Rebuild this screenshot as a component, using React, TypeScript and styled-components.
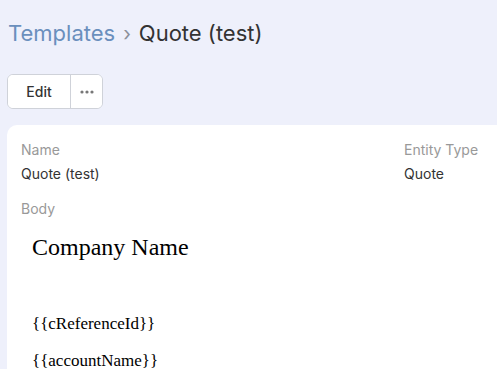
import styled, { createGlobalStyle } from "styled-components";

const GlobalStyle = createGlobalStyle`
  html, body {
    margin: 0;
    padding: 0;
    background: #eef0fb;
    font-family: Inter, "Noto Sans", sans-serif;
    overflow: hidden;
  }
`;

const template = {
  name: "Quote (test)",
  entityType: "Quote",
};

function DotsIcon() {
  return (
    <svg width="14" height="4" viewBox="0 0 14 4">
      <circle cx="2" cy="2" r="1.6" fill="#777" />
      <circle cx="7" cy="2" r="1.6" fill="#777" />
      <circle cx="12" cy="2" r="1.6" fill="#777" />
    </svg>
  );
}

function App() {
  return (
    <>
      <GlobalStyle />
      <Page>
        <Breadcrumb>
          <Crumb>Templates</Crumb>
          <Sep>›</Sep>
          <Current>{template.name}</Current>
        </Breadcrumb>
        <ButtonGroup>
          <GroupButton $wide>Edit</GroupButton>
          <GroupButton>
            <DotsIcon />
          </GroupButton>
        </ButtonGroup>
        <Card>
          <FieldGrid>
            <Field>
              <Label>Name</Label>
              <Value>{template.name}</Value>
            </Field>
            <Field>
              <Label>Entity Type</Label>
              <Value>{template.entityType}</Value>
            </Field>
          </FieldGrid>
          <Label>Body</Label>
          <BodyPreview>
            <CompanyName>Company Name</CompanyName>
            <Paragraph>{"{{cReferenceId}}"}</Paragraph>
            <Paragraph>{"{{accountName}}"}</Paragraph>
          </BodyPreview>
        </Card>
      </Page>
    </>
  );
}

const Page = styled.div`
  padding: 18px 0 0 7px;
`;
const Breadcrumb = styled.div`
  display: flex;
  align-items: baseline;
  gap: 8px;
  padding-left: 1px;
  font-size: 22px;
  line-height: 30px;
`;
const Crumb = styled.span`
  color: #6a8fbd;
`;
const Sep = styled.span`
  color: #8b8f99;
  font-size: 20px;
`;
const Current = styled.span`
  color: #333;
`;
const ButtonGroup = styled.div`
  display: inline-flex;
  margin-top: 25px;
  border: 1px solid #cfd2d9;
  border-radius: 6px;
  background: #fff;
  overflow: hidden;
`;
const GroupButton = styled.button<{ $wide?: boolean }>`
  display: flex;
  align-items: center;
  justify-content: center;
  width: ${(p) => (p.$wide ? "63px" : "31px")};
  height: 33px;
  border: none;
  border-right: ${(p) => (p.$wide ? "1px solid #cfd2d9" : "none")};
  background: #fff;
  color: #333;
  font-family: Inter, sans-serif;
  font-size: 14px;
  font-weight: 500;
  padding: 0;
`;
const Card = styled.div`
  margin-top: 16px;
  background: #fff;
  border-radius: 10px 0 0 0;
  padding: 16px 0 0 14px;
  min-height: 260px;
`;
const FieldGrid = styled.div`
  display: grid;
  grid-template-columns: 383px 1fr;
  margin-bottom: 17px;
`;
const Field = styled.div``;
const Label = styled.div`
  color: #999;
  font-size: 14px;
  line-height: 18px;
  margin-bottom: 6px;
`;
const Value = styled.div`
  color: #333;
  font-size: 14px;
  line-height: 18px;
`;
const BodyPreview = styled.div`
  padding: 8px 0 0 11px;
  font-family: "Liberation Serif", serif;
  color: #000;
`;
const CompanyName = styled.div`
  font-size: 24px;
  line-height: 30px;
  margin-bottom: 52px;
`;
const Paragraph = styled.p`
  font-size: 17px;
  margin: 0 0 17px;
  line-height: 20px;
`;

export default App;
